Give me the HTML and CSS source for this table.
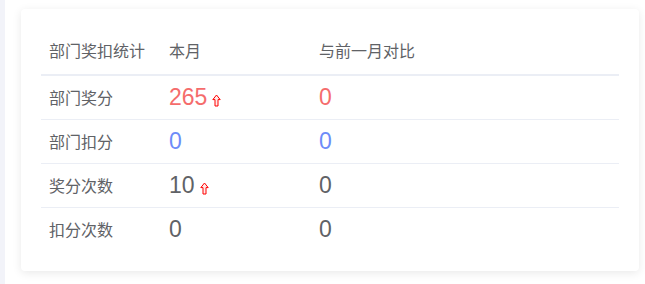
FILE: index.html
```html
<!DOCTYPE html>
<html lang="zh">
<head>
<meta charset="utf-8">
<link rel="stylesheet" href="styles.css">
</head>
<body>
<div class="page">
  <div class="strip"></div>
  <div class="card">
    <table class="stats">
      <thead>
        <tr><th class="c1">部门奖扣统计</th><th class="c2">本月</th><th>与前一月对比</th></tr>
      </thead>
      <tbody>
        <tr><td class="label">部门奖分</td><td><span class="num red">265</span><svg class="up" width="9" height="13" viewBox="0 0 9 13"><path d="M4.5 1 L8.2 5.6 L6 5.6 L6 12 L3 12 L3 5.6 L0.8 5.6 Z" fill="#ffeaea" stroke="#f00" stroke-width="1" stroke-linejoin="miter"/></svg></td><td><span class="num red">0</span></td></tr>
        <tr><td class="label">部门扣分</td><td><span class="num blue">0</span></td><td><span class="num blue">0</span></td></tr>
        <tr><td class="label">奖分次数</td><td><span class="num">10</span><svg class="up" width="9" height="13" viewBox="0 0 9 13"><path d="M4.5 1 L8.2 5.6 L6 5.6 L6 12 L3 12 L3 5.6 L0.8 5.6 Z" fill="#ffeaea" stroke="#f00" stroke-width="1" stroke-linejoin="miter"/></svg></td><td><span class="num">0</span></td></tr>
        <tr class="last"><td class="label">扣分次数</td><td><span class="num">0</span></td><td><span class="num">0</span></td></tr>
      </tbody>
    </table>
  </div>
</div>
</body>
</html>
```
FILE: styles.css
```css
html, body {
  margin: 0;
  padding: 0;
  background: #ffffff;
}
body {
  font-family: "Noto Sans CJK SC", "Liberation Sans", sans-serif;
  color: #606266;
}
.page {
  display: flex;
  height: 284px;
  overflow: hidden;
}
.strip {
  width: 5px;
  flex: none;
  background: #f2f3f9;
}
.card {
  margin: 9px 0 0 16px;
  width: 578px;
  height: 222px;
  padding: 20px;
  background: #fff;
  border-radius: 4px;
  box-shadow: 0 2px 10px rgba(0, 0, 0, 0.09);
  flex: none;
}
.stats {
  width: 578px;
  border-collapse: collapse;
  table-layout: fixed;
}
.stats th {
  height: 41px;
  padding: 0 0 4px 8px;
  text-align: left;
  font-weight: normal;
  font-size: 16px;
  color: #606266;
  border-bottom: 2px solid #ebeef5;
}
.stats th.c1 { width: 112px; }
.stats th.c2 { width: 142px; }
.stats td {
  height: 43px;
  padding: 0 0 0 8px;
  border-bottom: 1px solid #ebeef5;
  vertical-align: middle;
}
.stats td.label {
  height: 41px;
  padding-bottom: 2px;
}
.stats tr.last td {
  border-bottom: none;
}
.label {
  font-size: 16px;
  color: #606266;
}
.num {
  font-family: "Liberation Sans", Arial, sans-serif;
  font-size: 23px;
  color: #606266;
}
.red { color: #f56c6c; }
.blue { color: #6d8cf9; }
.up {
  margin-left: 5px;
  vertical-align: -2px;
}
```
